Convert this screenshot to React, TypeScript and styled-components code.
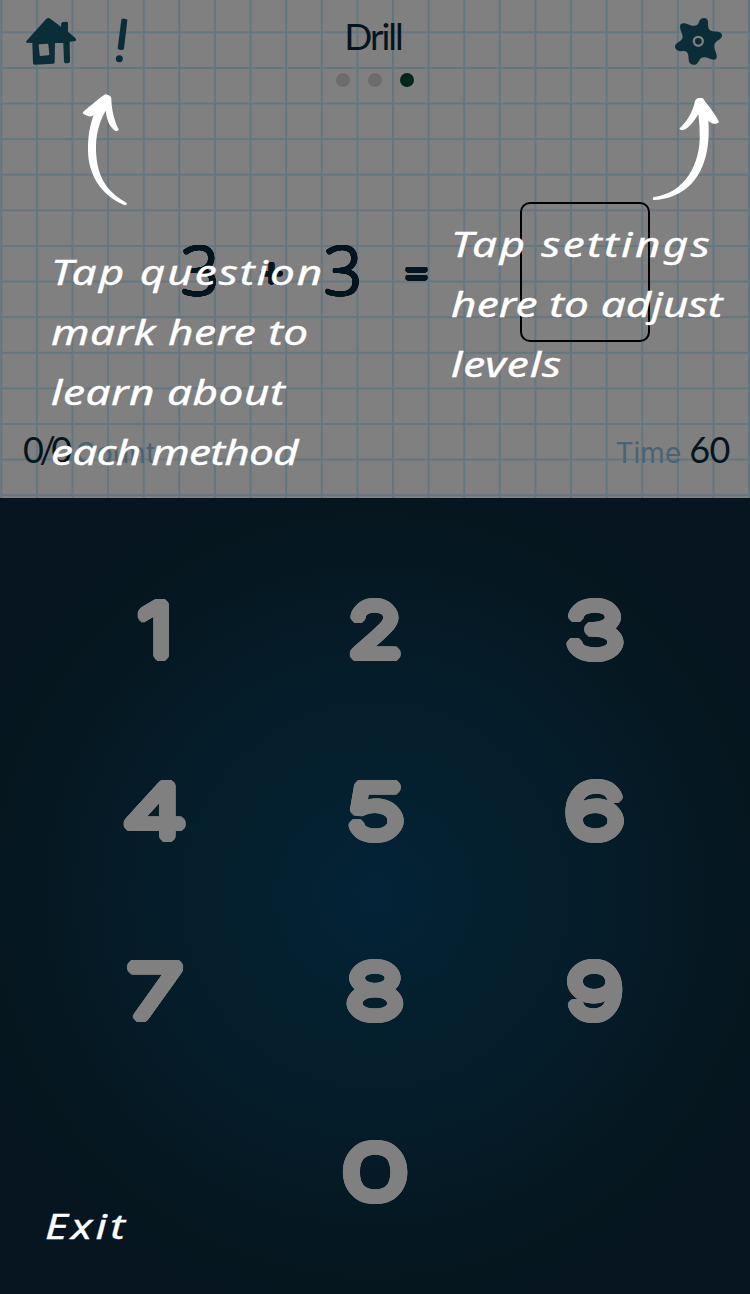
import React from "react";
import styled, { createGlobalStyle } from "styled-components";

const ink = "#04151f";
const iconInk = "#0b2d38";
const paper = "#808080";

const hand = `"Noto Sans", "Open Sans", sans-serif`;
const thin = `Lato, "Open Sans", sans-serif`;
const ui = `Inter, "Liberation Sans", sans-serif`;

/* Ring of shadows that thickens a glyph and rounds off its corners. */
const swell = (r: number, color: string, stretch = 1) =>
  Array.from({ length: 24 }, (_, i) => {
    const a = (i / 24) * Math.PI * 2;
    return `${((Math.cos(a) * r) / stretch).toFixed(2)}px ${(Math.sin(a) * r).toFixed(2)}px 0 ${color}`;
  }).join(", ");

const GlobalStyle = createGlobalStyle`
  * { box-sizing: border-box; }
  body { margin: 0; background: #06151f; }
  button { border: 0; padding: 0; background: none; color: inherit; cursor: pointer; }
`;

const Screen = styled.div`
  position: relative;
  width: 750px;
  height: 1294px;
  display: flex;
  flex-direction: column;
  overflow: hidden;
`;

const Sheet = styled.section`
  height: 498px;
  display: flex;
  flex-direction: column;
  color: ${ink};
  background-color: ${paper};
  background-image:
    linear-gradient(90deg, #627780 1.5px, transparent 1.5px),
    linear-gradient(180deg, #627780 1.5px, transparent 1.5px);
  background-size: 35.62px 35.62px;
  background-position: 0.3px 31.3px;
`;

const Header = styled.header`
  height: 100px;
  display: grid;
  grid-template-columns: 1fr auto 1fr;
  padding: 16px 26px 0 25px;
`;

const Tools = styled.div<{ $end?: boolean }>`
  display: flex;
  align-items: flex-start;
  gap: 38px;
  padding-top: 1px;
  justify-content: ${(p) => (p.$end ? "flex-end" : "flex-start")};
`;

const IconButton = styled.button`
  display: block;
  line-height: 0;
  color: ${iconInk};
`;

const Heading = styled.div`
  display: flex;
  flex-direction: column;
  align-items: center;
  gap: 14px;
`;

const Title = styled.h1`
  margin: 0 3px 0 0;
  height: 43px;
  font: 400 37px/40px ${thin};
  letter-spacing: -2px;
`;

const Dots = styled.div`
  display: flex;
  gap: 18px;
`;

const Dot = styled.span<{ $on?: boolean }>`
  width: 14px;
  height: 14px;
  border-radius: 50%;
  background: ${(p) => (p.$on ? "#00281a" : "#6c6c6c")};
`;

const Equation = styled.div`
  height: 342px;
  display: flex;
  align-items: center;
  padding: 2px 100px 0 164px;
`;

const Term = styled.span`
  width: 72px;
  padding-bottom: 6px;
  text-align: center;
  font: 300 67px/84px "Open Sans", sans-serif;
  text-shadow: ${swell(1.3, ink)};
`;

const Operator = styled.span<{ $w: number }>`
  width: ${(p) => p.$w}px;
  text-align: center;
  font: 400 41px/84px "Open Sans", sans-serif;
  text-shadow: ${swell(1.5, ink)};
`;

const Answer = styled.div`
  width: 130px;
  height: 140px;
  margin-left: auto;
  border: 2px solid #000;
  border-radius: 10px;
`;

const Stats = styled.div`
  display: flex;
  justify-content: space-between;
  padding: 0 20px 0 23px;
  margin-top: -15px;
`;

const Stat = styled.div`
  display: flex;
  align-items: baseline;
  gap: 8px;
  line-height: 44px;
`;

const Value = styled.span<{ $track: number }>`
  font-family: ${thin};
  font-size: 36px;
  letter-spacing: ${(p) => p.$track}px;
`;

const Label = styled.span`
  font-family: ${ui};
  font-size: 28px;
  color: #4a6374;
`;

const Pad = styled.section`
  flex: 1;
  display: grid;
  grid-template-columns: repeat(3, 220px);
  grid-auto-rows: 180.6px;
  justify-content: center;
  padding-top: 42px;
  background: radial-gradient(circle 430px at 375px 398px, #032338 0%, #04202e 28%, #051c29 55%, #051720 85%, #06151f 100%);
`;

const Key = styled.button<{ $stretch: number; $col?: number }>`
  grid-column: ${(p) => p.$col ?? "auto"};
  color: ${paper};
  font: 300 72px/1 Inter, sans-serif;
  text-shadow: ${(p) => swell(4.7, paper, p.$stretch)};
  span {
    display: inline-block;
    transform: scaleX(${(p) => p.$stretch});
  }
`;

const Coach = styled.div`
  position: absolute;
  inset: 0;
  color: #fff;
`;

const Arrow = styled.svg<{ $x: number; $y: number }>`
  position: absolute;
  left: ${(p) => p.$x}px;
  top: ${(p) => p.$y}px;
  fill: currentColor;
`;

const Hint = styled.p<{ $x: number; $y: number }>`
  position: absolute;
  left: ${(p) => p.$x}px;
  top: ${(p) => p.$y}px;
  margin: 0;
  font: italic 400 35px/60px ${hand};
  -webkit-text-stroke: 0.4px #fff;
`;

const Line = styled.span<{ $track: number }>`
  display: block;
  white-space: nowrap;
  letter-spacing: ${(p) => p.$track}px;
  transform: scaleX(1.26);
  transform-origin: left;
`;

const HomeIcon = () => (
  <svg width="52" height="50" viewBox="75 51 156 150" fill="currentColor">
    <path
      fillRule="evenodd"
      d="M139 56Q145 52 151 56L183 80L184 70Q185 66 190 66L200 65Q204 66 204 70L204 95L226 114Q230 119 227 123L209 125L210 184Q209 189 204 190L196 190Q192 189 192 184L190 129L165 129L164 187Q164 191 160 191L104 194Q99 194 99 189L97 129L80 128Q76 126 80 122ZM118 133L142 131Q145 131 145 135L148 162Q148 166 144 166L122 168Q119 168 119 165L116 136Q116 133 118 133Z"
    />
  </svg>
);

const HelpIcon = () => (
  <svg width="14" height="46" viewBox="345 54 42 138">
    <path d="M364 62Q366 58 372 59Q382 60 382 64L372 149Q371 153 363 153Q353 152 353 148Z" fill="currentColor" />
    <circle cx="358" cy="179" r="10.5" fill="currentColor" />
  </svg>
);

const GearIcon = () => (
  <svg width="50" height="50" viewBox="222 51 150 150" fill="currentColor">
    <path d="M297 66C300 50 323 50 324 64C325 78 322 92 338 94C352 95 367 96 366 107C364 121 345 120 343 136C341 152 356 165 348 177C338 184 324 171 312 172C298 172 298 186 289 193C278 198 265 190 266 178C266 166 264 152 250 153C238 155 224 150 225 138C229 126 245 126 248 112C249 100 235 86 242 73C252 65 266 76 276 77C288 78 294 76 297 66Z" />
    <circle cx="295" cy="124" r="13.5" fill="none" stroke={paper} strokeWidth="7" />
  </svg>
);

const keys: { n: number; stretch: number; col?: number }[] = [
  { n: 1, stretch: 1.25 },
  { n: 2, stretch: 1.26 },
  { n: 3, stretch: 1.4 },
  { n: 4, stretch: 1.45 },
  { n: 5, stretch: 1.42 },
  { n: 6, stretch: 1.44 },
  { n: 7, stretch: 1.42 },
  { n: 8, stretch: 1.36 },
  { n: 9, stretch: 1.35 },
  { n: 0, stretch: 1.56, col: 2 },
];

export default function App() {
  return (
    <Screen>
      <GlobalStyle />
      <Sheet>
        <Header>
          <Tools>
            <IconButton aria-label="Home"><HomeIcon /></IconButton>
            <IconButton aria-label="Help"><HelpIcon /></IconButton>
          </Tools>
          <Heading>
            <Title>Drill</Title>
            <Dots><Dot /><Dot /><Dot $on /></Dots>
          </Heading>
          <Tools $end>
            <IconButton aria-label="Settings"><GearIcon /></IconButton>
          </Tools>
        </Header>
        <Equation>
          <Term>3</Term>
          <Operator $w={71}>+</Operator>
          <Term>3</Term>
          <Operator $w={75}>=</Operator>
          <Answer />
        </Equation>
        <Stats>
          <Stat><Value $track={-4.5}>0/0</Value><Label>Count</Label></Stat>
          <Stat><Label>Time</Label><Value $track={-0.5}>60</Value></Stat>
        </Stats>
      </Sheet>
      <Pad>
        {keys.map((k) => (
          <Key key={k.n} $stretch={k.stretch} $col={k.col}><span>{k.n}</span></Key>
        ))}
      </Pad>
      <Coach>
        <Arrow $x={82} $y={93} width="46" height="114" viewBox="246 279 138 342">
          <path d="M316 283C324 284 334 288 334 296C335 330 342 360 356 388C356 393 350 394 345 392C326 378 320 355 317 332C295 370 287 410 288 450C290 530 320 575 379 608C383 613 378 616 373 615C300 585 264 520 264 450C263 410 270 375 281 344C275 351 265 352 248 340C250 334 256 330 262 325C280 312 295 295 316 283Z" />
        </Arrow>
        <Arrow $x={652} $y={96} width="68" height="106" viewBox="156 288 204 318">
          <path d="M296 294L308 294C325 318 345 340 357 366C350 374 335 373 325 362C333 470 300 590 163 600C157 600 157 593 162 591C255 580 303 490 299 400C299 375 297 360 295 343C285 360 270 380 256 388C248 391 240 390 238 386C265 360 278 335 285 303C288 297 292 295 296 294Z" />
        </Arrow>
        <Hint $x={51} $y={242}>
          <Line $track={1.6}>Tap question</Line>
          <Line $track={0.4}>mark here to</Line>
          <Line $track={0.4}>learn about</Line>
          <Line $track={-0.6}>each method</Line>
        </Hint>
        <Hint $x={451} $y={214}>
          <Line $track={1.9}>Tap settings</Line>
          <Line $track={0.1}>here to adjust</Line>
          <Line $track={0.7}>levels</Line>
        </Hint>
        <Hint as="button" $x={45} $y={1196}>
          <Line $track={2.6}>Exit</Line>
        </Hint>
      </Coach>
    </Screen>
  );
}
